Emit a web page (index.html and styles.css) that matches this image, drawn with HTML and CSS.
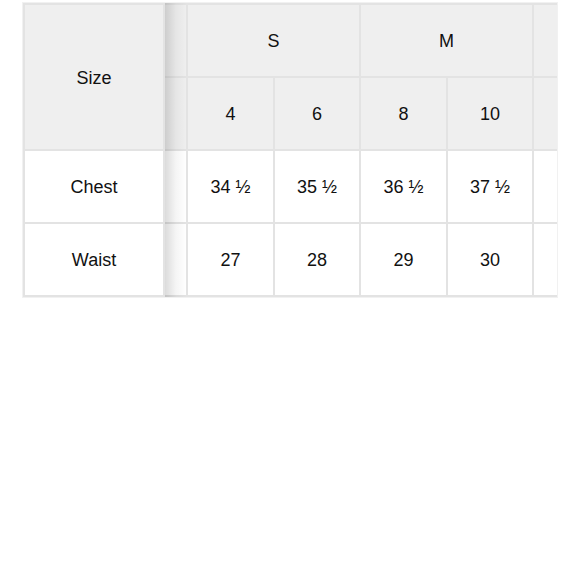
FILE: index.html
```html
<!DOCTYPE html>
<html lang="en">
<head>
<meta charset="utf-8">
<title>Size chart</title>
<link rel="stylesheet" href="styles.css">
</head>
<body>
<div class="wrap">
  <div class="fixed">
    <div class="cell head">Size</div>
    <div class="cell">Chest</div>
    <div class="cell">Waist</div>
  </div>
  <div class="scroll">
    <div class="cell head strip"></div>
    <div class="cell head span2">S</div>
    <div class="cell head span2">M</div>
    <div class="cell head"></div>

    <div class="cell head strip"></div>
    <div class="cell head">4</div>
    <div class="cell head">6</div>
    <div class="cell head">8</div>
    <div class="cell head">10</div>
    <div class="cell head"></div>

    <div class="cell strip"></div>
    <div class="cell">34 ½</div>
    <div class="cell">35 ½</div>
    <div class="cell">36 ½</div>
    <div class="cell">37 ½</div>
    <div class="cell"></div>

    <div class="cell strip"></div>
    <div class="cell">27</div>
    <div class="cell">28</div>
    <div class="cell">29</div>
    <div class="cell">30</div>
    <div class="cell"></div>
  </div>
</div>
</body>
</html>
```

FILE: styles.css
```css
html, body {
  margin: 0;
  padding: 0;
  background: #ffffff;
}

body {
  font-family: "Liberation Sans", Arial, sans-serif;
  font-size: 18px;
  color: #111111;
}

.wrap {
  margin: 2px 0 0 22px;
  width: 534px;
  border: 1px solid #f1f1f1;
  display: flex;
  overflow: hidden;
  position: relative;
}

.fixed {
  flex: 0 0 auto;
  display: grid;
  grid-template-columns: 138px;
  grid-template-rows: 144px 71px 71px;
  gap: 2px;
  padding: 2px;
  background: #e3e3e3;
  position: relative;
  z-index: 2;
}

.fixed::after {
  content: "";
  position: absolute;
  top: 0;
  bottom: 0;
  left: 100%;
  width: 22px;
  background: linear-gradient(to right, rgba(0, 0, 0, 0.14), rgba(0, 0, 0, 0.04) 50%, rgba(0, 0, 0, 0));
  pointer-events: none;
}

.scroll {
  flex: 0 0 auto;
  display: grid;
  grid-template-columns: 21px 85px 84px 85px 84px 85px;
  grid-template-rows: repeat(4, 71px);
  gap: 2px;
  padding: 2px 2px 2px 0;
  background: #e3e3e3;
}

.cell {
  background: #ffffff;
  display: flex;
  align-items: center;
  justify-content: center;
  white-space: nowrap;
  padding-top: 2px;
  box-sizing: border-box;
}

.head {
  background: #efefef;
}

.span2 {
  grid-column: span 2;
}
```
